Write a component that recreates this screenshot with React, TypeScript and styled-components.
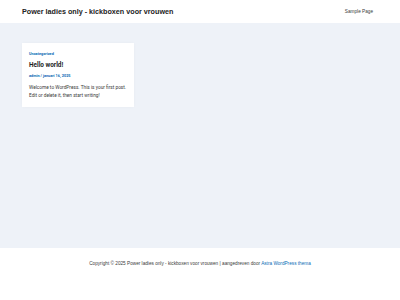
import React from "react";
import styled, { createGlobalStyle } from "styled-components";

const Global = createGlobalStyle`
  html, body { margin: 0; padding: 0; }
  body { font-family: "Roboto", "Liberation Sans", sans-serif; background: #ffffff; }
`;

const Page = styled.div`
  width: 400px;
  height: 300px;
  display: flex;
  flex-direction: column;
  background: #ffffff;
`;

const Header = styled.header`
  height: 23px;
  flex: none;
  display: flex;
  align-items: center;
  justify-content: space-between;
  padding: 0 27px 0 22px;
  background: #ffffff;
`;

const SiteTitle = styled.div`
  font-family: "Liberation Sans", Arial, sans-serif;
  font-weight: 700;
  font-size: 7.2px;
  color: #222222;
`;

const NavLink = styled.a`
  font-family: "Liberation Sans", Arial, sans-serif;
  font-size: 4.7px;
  color: #3a3a3a;
  text-decoration: none;
`;

const Main = styled.main`
  flex: none;
  height: 225px;
  background: #eef2f8;
  padding: 20px 22px 0;
  box-sizing: border-box;
`;

const Card = styled.article`
  width: 112px;
  box-sizing: border-box;
  background: #ffffff;
  padding: 8px 5px 7px 7px;
  display: flex;
  flex-direction: column;
  box-shadow: 0 0 3px rgba(0, 0, 0, 0.03);
`;

const Category = styled.a`
  font-size: 3.8px;
  font-weight: 700;
  color: #0a6bb5;
  text-decoration: none;
  line-height: 5px;
`;

const PostTitle = styled.h2`
  margin: 5px 0 0;
  font-size: 6.4px;
  font-weight: 700;
  color: #1e1e1e;
  line-height: 9px;
`;

const Meta = styled.div`
  margin-top: 3px;
  font-size: 3.8px;
  font-weight: 700;
  color: #0a6bb5;
  line-height: 5px;
`;

const Excerpt = styled.p`
  margin: 6px 0 0;
  font-size: 4.75px;
  line-height: 8px;
  color: #3a3a3a;
`;

const Footer = styled.footer`
  flex: 1;
  display: flex;
  justify-content: center;
  padding-top: 13px;
  background: #ffffff;
`;

const FooterText = styled.div`
  font-family: "Liberation Sans", Arial, sans-serif;
  font-size: 4.7px;
  color: #3a3a3a;
  line-height: 6px;
`;

const FooterLink = styled.a`
  color: #0a6bb5;
  text-decoration: none;
`;

export default function App() {
  return (
    <>
      <Global />
      <Page>
        <Header>
          <SiteTitle>Power ladies only - kickboxen voor vrouwen</SiteTitle>
          <NavLink href="#">Sample Page</NavLink>
        </Header>
        <Main>
          <Card>
            <Category href="#">Uncategorized</Category>
            <PostTitle>Hello world!</PostTitle>
            <Meta>admin / januari 16, 2025</Meta>
            <Excerpt>
              Welcome to WordPress. This is your first post. Edit or delete it, then start writing!
            </Excerpt>
          </Card>
        </Main>
        <Footer>
          <FooterText>
            Copyright © 2025 Power ladies only - kickboxen voor vrouwen | aangedreven door{" "}
            <FooterLink href="#">Astra WordPress thema</FooterLink>
          </FooterText>
        </Footer>
      </Page>
    </>
  );
}
